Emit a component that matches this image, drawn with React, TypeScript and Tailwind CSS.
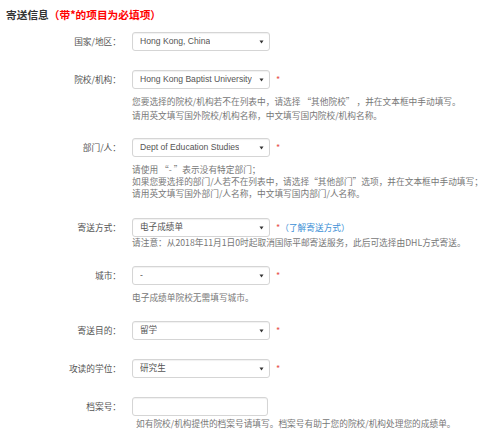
import type { ReactNode } from "react";

const LATIN = { fontFamily: '"Liberation Sans", "Noto Sans CJK SC", sans-serif' };
const CJK = { fontFamily: '"Noto Sans CJK SC", "Liberation Sans", sans-serif' };

function Arrow() {
  return (
    <svg width="5" height="4" viewBox="0 0 5 4" className="shrink-0">
      <path d="M0.5 0.5 L4.5 0.5 L2.5 3.5 Z" fill="#333" />
    </svg>
  );
}

function Select({ value }: { value: string }) {
  return (
    <div className="flex h-[19px] w-[138px] items-center justify-between rounded-[3px] border border-[#d5d5d5] bg-white pl-[7px] pr-[5px] shadow-[inset_0_1px_1px_rgba(0,0,0,0.06)]">
      <span className="truncate text-[8.6px] text-[#555]" style={LATIN}>
        {value}
      </span>
      <Arrow />
    </div>
  );
}

function Star() {
  return <span className="ml-[6px] text-[9px] leading-none text-[#e8524a]">*</span>;
}

type RowProps = {
  label: string;
  className?: string;
  children: ReactNode;
  help?: ReactNode;
};

function Row({ label, className, children, help }: RowProps) {
  return (
    <div className={`grid grid-cols-[121px_1fr] gap-x-[11px] ${className ?? ""}`}>
      <div className="flex h-[19px] items-center justify-end text-[8.7px] text-[#555]">{label}</div>
      <div className="flex h-[19px] items-center">{children}</div>
      {help && <div className="col-start-2 text-[8.7px] text-[#777]">{help}</div>}
    </div>
  );
}

export default function App() {
  return (
    <div className="h-[438px] w-[500px] overflow-hidden bg-white" style={CJK}>
      <h2 className="mt-[8px] pl-[6px] text-[10.7px] font-bold leading-[14px] text-[#333]">
        寄送信息<span className="text-[#f00]">（带*的项目为必填项）</span>
      </h2>

      <Row label="国家/地区：" className="mt-[10px]">
        <Select value="Hong Kong, China" />
      </Row>

      <Row
        label="院校/机构："
        className="mt-[19px]"
        help={
          <div className="mt-[6px] whitespace-nowrap leading-[14px]">
            <p>您要选择的院校/机构若不在列表中，请选择 “其他院校” ，并在文本框中手动填写。</p>
            <p>请用英文填写国外院校/机构名称，中文填写国内院校/机构名称。</p>
          </div>
        }
      >
        <Select value="Hong Kong Baptist University" />
        <Star />
      </Row>

      <Row
        label="部门/人："
        className="mt-[15px]"
        help={
          <div className="mt-[7px] whitespace-nowrap leading-[12px]">
            <p>请使用 “- ”表示没有特定部门；</p>
            <p>如果您要选择的部门/人若不在列表中，请选择“其他部门”选项，并在文本框中手动填写；</p>
            <p>请用英文填写国外部门/人名称，中文填写国内部门/人名称。</p>
          </div>
        }
      >
        <Select value="Dept of Education Studies" />
        <Star />
      </Row>

      <Row
        label="寄送方式："
        className="mt-[18px]"
        help={
          <p className="whitespace-nowrap leading-[12px]">
            请注意：从2018年11月1日0时起取消国际平邮寄送服务，此后可选择由DHL方式寄送。
          </p>
        }
      >
        <Select value="电子成绩单" />
        <Star />
        <a className="text-[8.7px] text-[#3d8fd6]">（了解寄送方式）</a>
      </Row>

      <Row
        label="城市："
        className="mt-[17px]"
        help={<p className="mt-[7px] leading-[12px]">电子成绩单院校无需填写城市。</p>}
      >
        <Select value="-" />
        <Star />
      </Row>

      <Row label="寄送目的：" className="mt-[17px]">
        <Select value="留学" />
        <Star />
      </Row>

      <Row label="攻读的学位：" className="mt-[19px]">
        <Select value="研究生" />
        <Star />
      </Row>

      <Row
        label="档案号："
        className="mt-[19px]"
        help={
          <p className="mt-[2px] whitespace-nowrap pl-[4px] leading-[12px]">
            如有院校/机构提供的档案号请填写。档案号有助于您的院校/机构处理您的成绩单。
          </p>
        }
      >
        <div className="h-[19px] w-[136px] rounded-[3px] border border-[#d5d5d5] bg-white shadow-[inset_0_1px_1px_rgba(0,0,0,0.06)]" />
      </Row>
    </div>
  );
}
